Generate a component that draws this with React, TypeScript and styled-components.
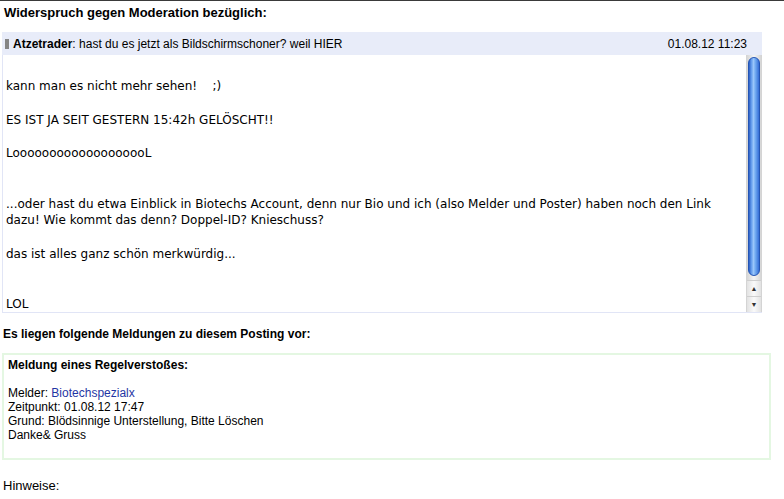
import React from "react";
import styled, { createGlobalStyle } from "styled-components";

const GlobalStyle = createGlobalStyle`
  html, body {
    margin: 0;
    padding: 0;
    background: #ffffff;
  }
  body {
    font-family: "Liberation Sans", Arial, sans-serif;
    font-size: 12px;
    color: #000;
  }
`;

const Page = styled.div`
  width: 784px;
  height: 499px;
  border-top: solid 1px #3a3a3a;
  box-sizing: border-box;
  overflow: hidden;
`;

const Title = styled.h1`
  margin: 0;
  padding: 4px 0 0 4px;
  height: 31px;
  box-sizing: border-box;
  font-size: 13px;
  font-weight: bold;
  line-height: 16px;
`;

const Post = styled.div`
  width: 760px;
  margin-left: 2px;
`;

const PostHeader = styled.div`
  height: 23px;
  display: flex;
  align-items: center;
  justify-content: space-between;
  padding: 0 15px 0 3px;
  background-color: #e8ecf9;
  font-size: 12px;
`;

const Author = styled.div`
  display: flex;
  align-items: center;
`;

const Marker = styled.span`
  flex: 0 0 4px;
  width: 4px;
  height: 10px;
  margin-right: 4px;
  background-color: #858585;
`;

const PostBody = styled.div`
  height: 257px;
  display: flex;
  border-left: solid 1px #e1e5f6;
  border-bottom: solid 1px #e1e5f6;
`;

const PostText = styled.div`
  flex: 1;
  overflow: hidden;
  padding: 23px 0 0 3px;
  font-family: "DejaVu Sans", Verdana, sans-serif;
  font-size: 12px;
  line-height: 16.8px;
  white-space: pre-wrap;
`;

const Scrollbar = styled.div`
  width: 16px;
  display: flex;
  flex-direction: column;
  background: #ececec;
  border-left: solid 1px #d4d4d4;
  border-right: solid 1px #d4d4d4;
  box-sizing: border-box;
`;

const Track = styled.div`
  flex: 1;
  padding: 2px 1px 4px;
  display: flex;
  background: linear-gradient(to right, #d6d6d6, #f4f4f4 50%, #d6d6d6);
`;

const Thumb = styled.div`
  flex: 1;
  border-radius: 7px;
  border: solid 1px #2455b4;
  background: linear-gradient(
    to right,
    #2b5ec4,
    #5f98ea 22%,
    #9ac6fa 45%,
    #6fa8f0 65%,
    #356dd6
  );
`;

const ArrowButton = styled.div`
  height: 15px;
  display: flex;
  align-items: center;
  justify-content: center;
  border-top: solid 1px #cfcfcf;
  background: linear-gradient(to right, #e2e2e2, #fafafa 50%, #e2e2e2);
  font-size: 7px;
  color: #333;
`;

const Heading = styled.div`
  padding: 14px 0 0 3px;
  height: 40px;
  box-sizing: border-box;
  font-weight: bold;
  font-size: 12px;
`;

const Report = styled.div`
  width: 769px;
  height: 107px;
  margin-left: 2px;
  box-sizing: border-box;
  border: solid 2px #e4f7e2;
  padding: 3px 4px;
  line-height: 14px;
`;

const ReportTitle = styled.div`
  font-weight: bold;
  margin-bottom: 14px;
`;

const Link = styled.a`
  color: #1f36a4;
  text-decoration: none;
`;

const Notes = styled.div`
  padding: 18px 0 0 3px;
  font-size: 13px;
`;

const postText = `kann man es nicht mehr sehen!    ;)

ES IST JA SEIT GESTERN 15:42h GELÖSCHT!!

LooooooooooooooooooL


...oder hast du etwa Einblick in Biotechs Account, denn nur Bio und ich (also Melder und Poster) haben noch den Link dazu! Wie kommt das denn? Doppel-ID? Knieschuss?

das ist alles ganz schön merkwürdig...


LOL`;

const App = () => {
  return (
    <>
      <GlobalStyle />
      <Page>
        <Title>Widerspruch gegen Moderation bezüglich:</Title>
        <Post>
          <PostHeader>
            <Author>
              <Marker />
              <span>
                <b>Atzetrader</b>: hast du es jetzt als Bildschirmschoner? weil HIER
              </span>
            </Author>
            <span>01.08.12 11:23</span>
          </PostHeader>
          <PostBody>
            <PostText>{postText}</PostText>
            <Scrollbar>
              <Track>
                <Thumb />
              </Track>
              <ArrowButton>▲</ArrowButton>
              <ArrowButton>▼</ArrowButton>
            </Scrollbar>
          </PostBody>
        </Post>
        <Heading>Es liegen folgende Meldungen zu diesem Posting vor:</Heading>
        <Report>
          <ReportTitle>Meldung eines Regelverstoßes:</ReportTitle>
          <div>
            Melder: <Link href="#">Biotechspezialx</Link>
          </div>
          <div>Zeitpunkt: 01.08.12 17:47</div>
          <div>Grund: Blödsinnige Unterstellung, Bitte Löschen</div>
          <div>Danke&amp; Gruss</div>
        </Report>
        <Notes>Hinweise:</Notes>
      </Page>
    </>
  );
};

export default App;
